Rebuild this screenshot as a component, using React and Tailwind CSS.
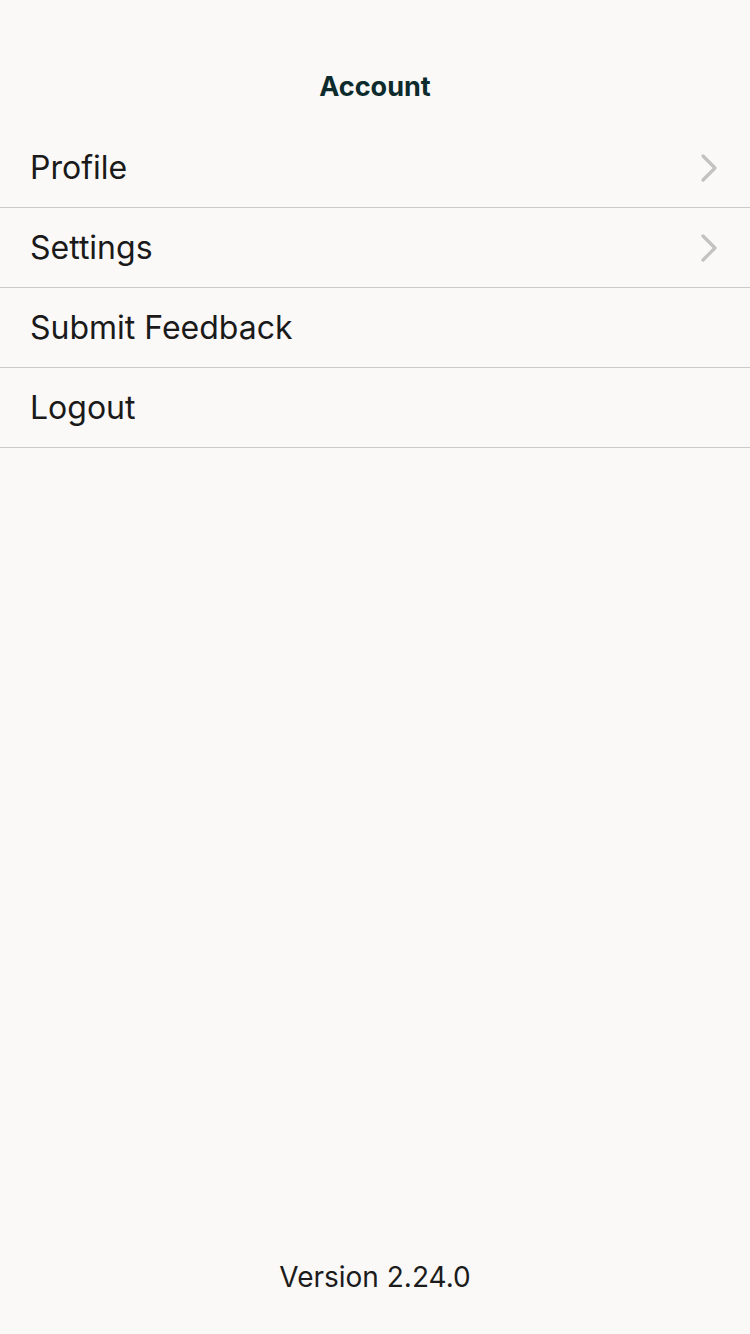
import { ChevronRight } from 'lucide-react';

const items = [
  { label: 'Profile', arrow: true },
  { label: 'Settings', arrow: true },
  { label: 'Submit Feedback', arrow: false },
  { label: 'Logout', arrow: false },
];

export default function App() {
  return (
    <div
      className="flex flex-col min-h-screen bg-[#faf9f7] text-[#1a1a1a]"
      style={{ fontFamily: 'Inter, "Liberation Sans", sans-serif' }}
    >
      {/* Header */}
      <div className="flex items-center justify-center h-[128px] pt-[44px]">
        <h1 className="text-[27px] font-bold text-[#0d2b2c] leading-none">Account</h1>
      </div>

      {/* Menu */}
      <div className="flex flex-col">
        {items.map((item) => (
          <button
            key={item.label}
            className="flex items-center justify-between h-[80px] pl-[30px] pr-[17px] border-b border-[#cbcbcb] text-left"
          >
            <span className="text-[32px] leading-none">{item.label}</span>
            {item.arrow && <ChevronRight className="w-[48px] h-[48px] text-[#c2c2c2]" strokeWidth={1.6} />}
          </button>
        ))}
      </div>

      <div className="flex-1"></div>

      {/* Version */}
      <div className="flex justify-center pb-[40px]">
        <span className="text-[28px] leading-[34px] text-[#1c1c1c]">Version 2.24.0</span>
      </div>
    </div>
  );
}
